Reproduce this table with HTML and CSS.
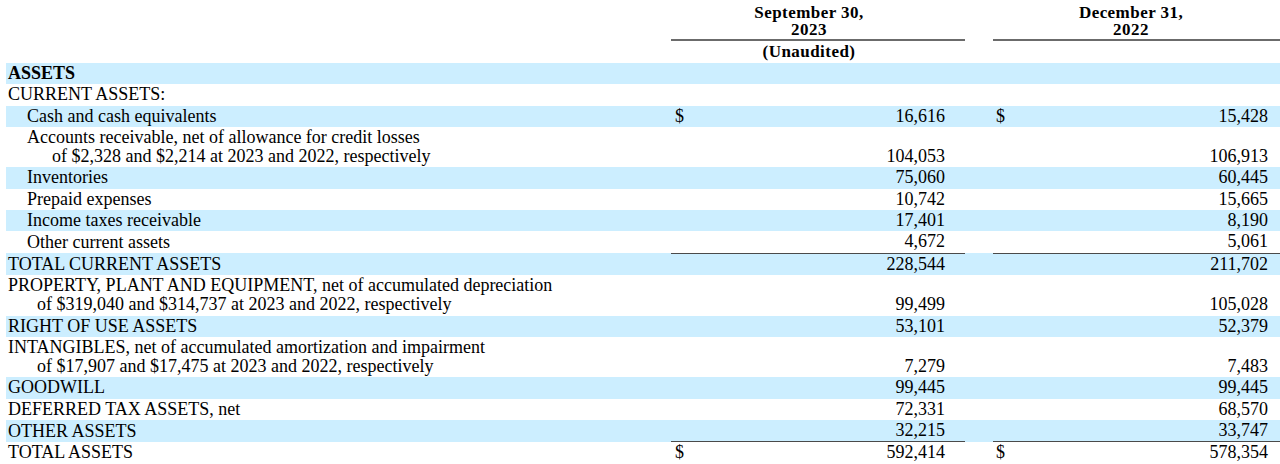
FILE: index.html
```html
<!DOCTYPE html>
<html>
<head>
<meta charset="utf-8">
<link rel="stylesheet" href="styles.css">
</head>
<body>
<table class="sheet">
  <colgroup>
    <col class="c-label">
    <col class="c-cur1">
    <col class="c-num1">
    <col class="c-gap">
    <col class="c-cur2">
    <col class="c-num2">
  </colgroup>
  <thead>
    <tr class="h1">
      <th></th>
      <th colspan="2" class="hd hd1"><div>September 30,</div><div>2023</div></th>
      <th></th>
      <th colspan="2" class="hd hd2"><div>December 31,</div><div>2022</div></th>
    </tr>
    <tr class="h2">
      <th></th>
      <th colspan="2" class="hd hd1 sub">(Unaudited)</th>
      <th></th>
      <th colspan="2" class="sub"></th>
    </tr>
  </thead>
  <tbody>
    <tr class="band"><td class="lbl strong">ASSETS</td><td></td><td></td><td></td><td></td><td></td></tr>
    <tr><td class="lbl">CURRENT ASSETS:</td><td></td><td></td><td></td><td></td><td></td></tr>
    <tr class="band"><td class="lbl l2">Cash and cash equivalents</td><td class="cur cur1">$</td><td class="num num1">16,616</td><td></td><td class="cur cur2">$</td><td class="num num2">15,428</td></tr>
    <tr><td class="lbl l2"><div>Accounts receivable, net of allowance for credit losses</div><div class="cont2">of $2,328 and $2,214 at 2023 and 2022, respectively</div></td><td></td><td class="num num1">104,053</td><td></td><td></td><td class="num num2">106,913</td></tr>
    <tr class="band"><td class="lbl l2">Inventories</td><td></td><td class="num num1">75,060</td><td></td><td></td><td class="num num2">60,445</td></tr>
    <tr><td class="lbl l2">Prepaid expenses</td><td></td><td class="num num1">10,742</td><td></td><td></td><td class="num num2">15,665</td></tr>
    <tr class="band"><td class="lbl l2">Income taxes receivable</td><td></td><td class="num num1">17,401</td><td></td><td></td><td class="num num2">8,190</td></tr>
    <tr><td class="lbl l2">Other current assets</td><td class="rule"></td><td class="num num1 rule">4,672</td><td></td><td class="rule"></td><td class="num num2 rule">5,061</td></tr>
    <tr class="band"><td class="lbl">TOTAL CURRENT ASSETS</td><td></td><td class="num num1">228,544</td><td></td><td></td><td class="num num2">211,702</td></tr>
    <tr><td class="lbl"><div>PROPERTY, PLANT AND EQUIPMENT, net of accumulated depreciation</div><div class="cont1">of $319,040 and $314,737 at 2023 and 2022, respectively</div></td><td></td><td class="num num1">99,499</td><td></td><td></td><td class="num num2">105,028</td></tr>
    <tr class="band"><td class="lbl">RIGHT OF USE ASSETS</td><td></td><td class="num num1">53,101</td><td></td><td></td><td class="num num2">52,379</td></tr>
    <tr><td class="lbl"><div>INTANGIBLES, net of accumulated amortization and impairment</div><div class="cont1">of $17,907 and $17,475 at 2023 and 2022, respectively</div></td><td></td><td class="num num1">7,279</td><td></td><td></td><td class="num num2">7,483</td></tr>
    <tr class="band"><td class="lbl">GOODWILL</td><td></td><td class="num num1">99,445</td><td></td><td></td><td class="num num2">99,445</td></tr>
    <tr><td class="lbl">DEFERRED TAX ASSETS, net</td><td></td><td class="num num1">72,331</td><td></td><td></td><td class="num num2">68,570</td></tr>
    <tr class="band"><td class="lbl">OTHER ASSETS</td><td></td><td class="num num1">32,215</td><td></td><td></td><td class="num num2">33,747</td></tr>
    <tr class="total"><td class="lbl">TOTAL ASSETS</td><td class="cur cur1 over">$</td><td class="num num1 over">592,414</td><td></td><td class="cur cur2 over">$</td><td class="num num2 over">578,354</td></tr>
  </tbody>
</table>
</body>
</html>
```

FILE: styles.css
```css
html, body {
  margin: 0;
  padding: 0;
  background: #ffffff;
}

body {
  font-family: "Liberation Serif", "Times New Roman", serif;
  font-size: 18px;
  color: #000000;
}

.sheet {
  margin: 4px 0 0 6px;
  width: 1274px;
  table-layout: fixed;
  border-collapse: collapse;
  border-spacing: 0;
}

.c-label { width: 665px; }
.c-cur1 { width: 30px; }
.c-num1 { width: 264px; }
.c-gap { width: 28px; }
.c-cur2 { width: 30px; }
.c-num2 { width: 257px; }

th, td {
  padding: 0;
  vertical-align: bottom;
  white-space: nowrap;
}

.hd {
  font-weight: bold;
  text-align: center;
  font-size: 17px;
  letter-spacing: 0.45px;
  line-height: 17px;
}

.h1 .hd {
  border-bottom: 2px solid #6b6b6b;
  padding-bottom: 1px;
}

.hd1 { padding-right: 18px; }
.hd2 { padding-right: 11px; }

.h2 .sub {
  padding-top: 2px;
  padding-bottom: 3px;
  line-height: 17px;
}

tbody td {
  padding-top: 1px;
  padding-bottom: 1px;
  line-height: 19.3px;
}

.band td {
  background: #cceeff;
}

.lbl {
  padding-left: 2px;
}

.strong {
  font-weight: bold;
}

.l2 {
  padding-left: 21px;
}

.cont2 {
  padding-left: 25px;
}

.cont1 {
  padding-left: 29px;
}

.num {
  text-align: right;
}

.num1 { padding-right: 20px; }
.num2 { padding-right: 12px; }

.cur {
  text-align: left;
}

.cur1 { padding-left: 4px; }
.cur2 { padding-left: 3px; }

.rule {
  border-bottom: 1px solid #4a4a4a;
}

.over {
  border-top: 1px solid #4a4a4a;
}
```
